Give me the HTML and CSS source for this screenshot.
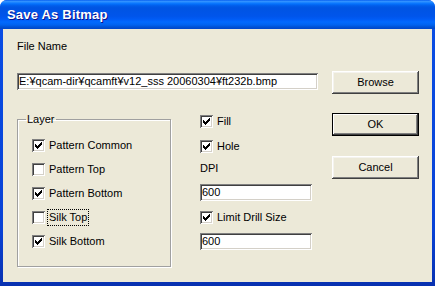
FILE: index.html
```html
<!DOCTYPE html>
<html>
<head>
<meta charset="utf-8">
<link rel="stylesheet" href="styles.css">
</head>
<body>
<div class="window">
  <div class="titlebar"><span class="title">Save As Bitmap</span></div>
  <div class="client">
    <div class="label">File Name</div>
    <div class="filerow">
      <div class="textbox path">E:¥qcam-dir¥qcamft¥v12_sss 20060304¥ft232b.bmp</div>
      <div class="button browse">Browse</div>
    </div>
    <div class="lower">
      <fieldset class="group">
        <legend class="legend">Layer</legend>
        <div class="check-row"><span class="box"><svg viewBox="0 0 13 13" width="13" height="13"><path class="tick" d="M3 5h1v1h1v1h1v-1h1v-1h1v-1h1v-1h1v3h-1v1h-1v1h-1v1h-1v1h-1v-1h-1v-1h-1z"/></svg></span><span class="text">Pattern Common</span></div>
        <div class="check-row"><span class="box"></span><span class="text">Pattern Top</span></div>
        <div class="check-row"><span class="box"><svg viewBox="0 0 13 13" width="13" height="13"><path class="tick" d="M3 5h1v1h1v1h1v-1h1v-1h1v-1h1v-1h1v3h-1v1h-1v1h-1v1h-1v1h-1v-1h-1v-1h-1z"/></svg></span><span class="text">Pattern Bottom</span></div>
        <div class="check-row"><span class="box"></span><span class="text focus">Silk Top</span></div>
        <div class="check-row"><span class="box"><svg viewBox="0 0 13 13" width="13" height="13"><path class="tick" d="M3 5h1v1h1v1h1v-1h1v-1h1v-1h1v-1h1v3h-1v1h-1v1h-1v1h-1v1h-1v-1h-1v-1h-1z"/></svg></span><span class="text">Silk Bottom</span></div>
      </fieldset>
      <div class="middle">
        <div class="check-row mid"><span class="box"><svg viewBox="0 0 13 13" width="13" height="13"><path class="tick" d="M3 5h1v1h1v1h1v-1h1v-1h1v-1h1v-1h1v3h-1v1h-1v1h-1v1h-1v1h-1v-1h-1v-1h-1z"/></svg></span><span class="text">Fill</span></div>
        <div class="check-row mid hole"><span class="box"><svg viewBox="0 0 13 13" width="13" height="13"><path class="tick" d="M3 5h1v1h1v1h1v-1h1v-1h1v-1h1v-1h1v3h-1v1h-1v1h-1v1h-1v1h-1v-1h-1v-1h-1z"/></svg></span><span class="text">Hole</span></div>
        <div class="label dpi">DPI</div>
        <div class="textbox small dpi-box">600</div>
        <div class="check-row mid limit"><span class="box"><svg viewBox="0 0 13 13" width="13" height="13"><path class="tick" d="M3 5h1v1h1v1h1v-1h1v-1h1v-1h1v-1h1v3h-1v1h-1v1h-1v1h-1v1h-1v-1h-1v-1h-1z"/></svg></span><span class="text">Limit Drill Size</span></div>
        <div class="textbox small drill-box">600</div>
      </div>
      <div class="actions">
        <div class="button default">OK</div>
        <div class="button cancel">Cancel</div>
      </div>
    </div>
  </div>
</div>
</body>
</html>
```
FILE: styles.css
```css
html, body {
  margin: 0;
  padding: 0;
  background: #ffffff;
}
.window {
  width: 435px;
  height: 286px;
  box-sizing: border-box;
  background: linear-gradient(to bottom, #0a4ee6 0%, #0842d6 80%, #0831b0 100%);
  border-radius: 7px 7px 0 0;
  display: flex;
  flex-direction: column;
  overflow: hidden;
  font-family: "Liberation Sans", Arial, sans-serif;
  font-size: 11px;
  line-height: 13px;
  color: #000;
}
.titlebar {
  height: 29px;
  flex: none;
  display: flex;
  align-items: center;
  padding-left: 7px;
  background: linear-gradient(to bottom, #0058ee 0%, #3593ff 4%, #288eff 7%, #127dff 10%, #036ffc 14%, #0262ee 18%, #0057e5 24%, #0054e3 30%, #0055eb 56%, #005bf5 66%, #026afe 76%, #0062ef 86%, #0052d6 93%, #0046c8 100%);
}
.title {
  color: #fff;
  font-weight: bold;
  font-size: 13px;
  letter-spacing: 0.2px;
  text-shadow: 1px 1px #0f1089;
  margin-top: -1px;
}
.client {
  flex: 1;
  margin: 0 3px 4px 3px;
  background: #ece9d8;
  padding: 11px 0 0 14px;
}
.label {
  height: 13px;
}
.filerow {
  display: flex;
  align-items: flex-start;
  margin-top: 18px;
}
.textbox {
  box-sizing: border-box;
  height: 17px;
  background: #fff;
  box-shadow: inset 1px 1px #808080, inset -1px -1px #ffffff, inset 2px 2px #404040, inset -2px -2px #d4d0c8;
  padding: 2px 2px 0 2px;
  white-space: nowrap;
  overflow: hidden;
}
.path {
  width: 301px;
  margin-top: 2px;
}
.button {
  box-sizing: border-box;
  width: 87px;
  height: 23px;
  background: #ece9d8;
  box-shadow: inset -1px -1px #404040, inset 1px 1px #ffffff, inset -2px -2px #808080, inset 2px 2px #f4f3ee;
  display: flex;
  align-items: center;
  justify-content: center;
}
.browse {
  margin-left: 14px;
}
.lower {
  display: flex;
  align-items: flex-start;
  margin-top: 15px;
}
.group {
  box-sizing: border-box;
  width: 154px;
  margin: 4px 0 0 0;
  min-width: 0;
  padding: 7px 8px 13px 8px;
  border: 1px solid #a0a0a0;
  box-shadow: inset 1px 1px #ffffff, 1px 1px #ffffff;
}
.legend {
  padding: 0 1px;
  line-height: 13px;
  height: 13px;
}
.check-row {
  height: 24px;
  display: flex;
  align-items: center;
  margin-left: 6px;
}
.box {
  flex: none;
  width: 13px;
  height: 13px;
  background: #fff;
  box-shadow: inset 1px 1px #808080, inset -1px -1px #ffffff, inset 2px 2px #404040, inset -2px -2px #d4d0c8;
  margin-right: 4px;
  display: block;
}
.box svg {
  display: block;
  shape-rendering: crispEdges;
}
.tick {
  fill: #000;
}
.text {
  white-space: nowrap;
}
.focus {
  outline: 1px dotted #000;
  outline-offset: 0;
  padding: 1px 1px 1px 1px;
  margin-left: -1px;
}
.middle {
  width: 112px;
  margin-left: 29px;
  display: flex;
  flex-direction: column;
}
.mid {
  margin-left: 0;
}
.hole {
  margin-top: 1px;
}
.dpi {
  margin-top: 4px;
}
.small {
  width: 112px;
}
.dpi-box {
  margin-top: 9px;
}
.limit {
  margin-top: 4px;
}
.drill-box {
  margin-top: 4px;
}
.actions {
  margin-left: 20px;
  display: flex;
  flex-direction: column;
}
.default {
  margin-top: 4px;
  box-shadow: inset 0 0 0 1px #000, inset -2px -2px #404040, inset 2px 2px #ffffff, inset -3px -3px #808080;
}
.cancel {
  margin-top: 20px;
}
```
